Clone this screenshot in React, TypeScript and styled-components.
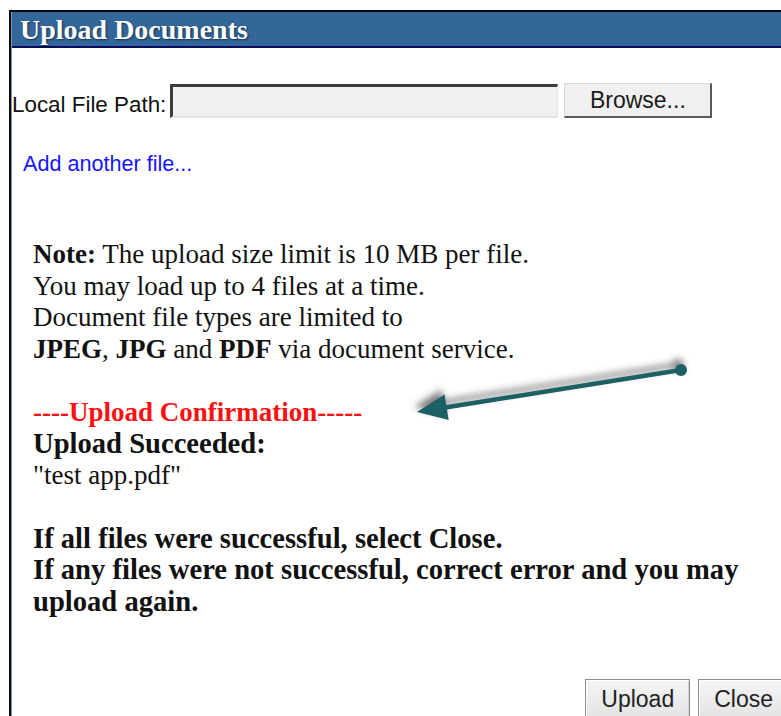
import React from "react";
import styled, { createGlobalStyle } from "styled-components";

const GlobalStyle = createGlobalStyle`
  html, body {
    margin: 0;
    padding: 0;
    background: #ffffff;
    overflow: hidden;
  }
`;

const Page = styled.div`
  position: relative;
  width: 781px;
  height: 716px;
  padding: 10px 0 0 9px;
  box-sizing: border-box;
  overflow: hidden;
`;

const Dialog = styled.section`
  width: 800px;
  min-height: 720px;
  border-top: 2px solid #050505;
  border-left: 2px solid #0b0b0b;
  box-sizing: border-box;
  display: flex;
`;

const Frame = styled.div`
  flex: 1;
  border-left: 1px solid #8295ab;
  display: flex;
  flex-direction: column;
`;

const TitleBar = styled.h1`
  margin: 0;
  padding: 2px 0 0 8px;
  box-sizing: content-box;
  height: 32px;
  background: #336699;
  border-bottom: 2px solid #0a0a5e;
  color: #ffffff;
  font: bold 28px/32px "Liberation Serif", "Times New Roman", serif;
  text-shadow: 1px 1px 2px rgba(0, 0, 0, 0.55);
`;

const Body = styled.div`
  display: flex;
  flex-direction: column;
`;

const FileRow = styled.div`
  margin-top: 35px;
  display: flex;
  align-items: flex-end;
`;

const FieldLabel = styled.label`
  font: 22.4px/26px "Liberation Sans", Arial, sans-serif;
  color: #111;
  margin-right: 4px;
`;

const PathInput = styled.input`
  width: 388px;
  height: 34px;
  box-sizing: border-box;
  margin: 0;
  border-style: solid;
  border-width: 3px 1px 2px 3px;
  border-color: #3d3d3d #e4e4e4 #e4e4e4 #3d3d3d;
  background: #f0f0f0;
  outline: none;
`;

const BrowseButton = styled.button`
  margin-left: 6px;
  width: 148px;
  height: 35px;
  box-sizing: border-box;
  padding: 0;
  border-style: solid;
  border-width: 1px 2px 2px 1px;
  border-color: #dadada #5a5a5a #5a5a5a #dadada;
  background: #f0f0f0;
  color: #1a1a1a;
  font: 23px "Liberation Sans", Arial, sans-serif;
`;

const AddLink = styled.a`
  align-self: flex-start;
  margin: 34px 0 0 11px;
  font: 21.6px/24px "Liberation Sans", Arial, sans-serif;
  color: #1515ff;
  text-decoration: none;
`;

const Notes = styled.div`
  margin-top: 63px;
  padding-left: 21px;
  font: 27px/31.5px "Liberation Serif", "Times New Roman", serif;
  color: #111;
`;

const Line = styled.div<{ $bold?: boolean; $large?: boolean; $tone?: string }>`
  min-height: 31.5px;
  font-weight: ${(p) => (p.$bold ? "bold" : "normal")};
  font-size: ${(p) => (p.$large ? "28.6px" : "inherit")};
  color: ${(p) => p.$tone ?? "inherit"};
`;

const ButtonBar = styled.div`
  margin-top: 62px;
  display: flex;
  justify-content: flex-end;
  gap: 8px;
  padding-right: 20px;
`;

const ActionButton = styled.button`
  height: 40px;
  padding: 0 15px;
  border: 1px solid #8c8c8c;
  box-shadow: inset 1px 1px 0 #ffffff, inset -1px -1px 0 #d0d0d0;
  background: linear-gradient(#f5f5f5, #e3e3e3);
  color: #222;
  font: 23px "Liberation Sans", Arial, sans-serif;
`;

const Callout = styled.svg`
  position: absolute;
  left: 0;
  top: 0;
  pointer-events: none;
`;

function PointerArrow() {
  return (
    <Callout width="781" height="716" viewBox="0 0 781 716">
      <defs>
        <filter id="arrowShade" x="-20%" y="-100%" width="140%" height="300%">
          <feDropShadow dx="-3" dy="-5" stdDeviation="3.5" floodColor="#444" floodOpacity="0.7" />
        </filter>
      </defs>
      <g filter="url(#arrowShade)" fill="#1c5e65" stroke="#1c5e65">
        <line x1="681" y1="370" x2="442" y2="408" strokeWidth="4.5" strokeLinecap="round" />
        <circle cx="681" cy="370" r="6" stroke="none" />
        <polygon points="417,412 444.5,394.5 448.7,420.1" stroke="none" />
      </g>
    </Callout>
  );
}

export default function App() {
  return (
    <>
      <GlobalStyle />
      <Page>
        <Dialog>
          <Frame>
            <TitleBar>Upload Documents</TitleBar>
            <Body>
              <FileRow>
                <FieldLabel htmlFor="localPath">Local File Path:</FieldLabel>
                <PathInput id="localPath" type="text" readOnly />
                <BrowseButton type="button">Browse...</BrowseButton>
              </FileRow>
              <AddLink href="#">Add another file...</AddLink>
              <Notes>
                <Line>
                  <b>Note:</b> The upload size limit is 10 MB per file.
                </Line>
                <Line>You may load up to 4 files at a time.</Line>
                <Line>Document file types are limited to</Line>
                <Line>
                  <b>JPEG</b>, <b>JPG</b> and <b>PDF</b> via document service.
                </Line>
                <Line />
                <Line $bold $tone="#ff1010">----Upload Confirmation-----</Line>
                <Line $bold $large>Upload Succeeded:</Line>
                <Line>"test app.pdf"</Line>
                <Line />
                <Line $bold $large>If all files were successful, select Close.</Line>
                <Line $bold $large>
                  If any files were not successful, correct error and you may
                  <br />
                  upload again.
                </Line>
              </Notes>
              <ButtonBar>
                <ActionButton type="button">Upload</ActionButton>
                <ActionButton type="button">Close</ActionButton>
              </ButtonBar>
            </Body>
          </Frame>
        </Dialog>
        <PointerArrow />
      </Page>
    </>
  );
}
